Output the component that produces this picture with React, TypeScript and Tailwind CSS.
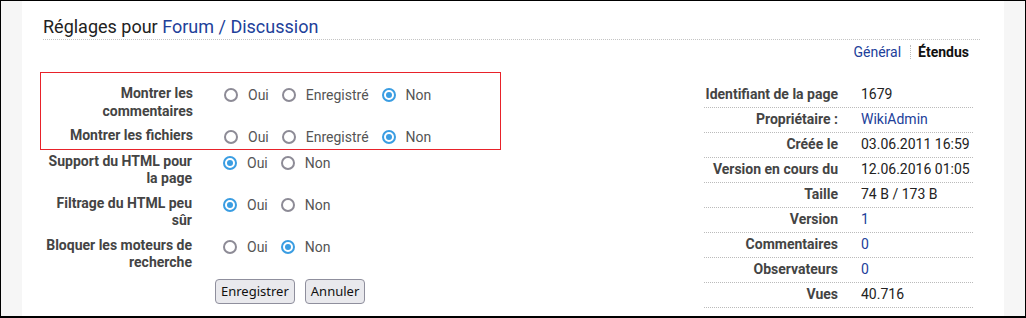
import React from "react";

const BLUE = "text-[#21409a]";

function Radio({ checked }: { checked: boolean }) {
  return checked ? (
    <span className="w-[14px] h-[14px] shrink-0 rounded-full border-2 border-[#3a9de2] flex items-center justify-center">
      <span className="w-[6px] h-[6px] rounded-full bg-[#3a9de2]" />
    </span>
  ) : (
    <span className="w-[14px] h-[14px] shrink-0 rounded-full border-2 border-[#8d8b96]" />
  );
}

function Options({ opts, sel }: { opts: string[]; sel: number }) {
  return (
    <div className="flex items-center h-[18px] translate-y-[1px]">
      {opts.map((o, i) => (
        <div key={o} className="flex items-center mr-[13px]">
          <Radio checked={i === sel} />
          <span className="ml-[10px] text-[#555]">{o}</span>
        </div>
      ))}
    </div>
  );
}

function Row({ label, opts, sel }: { label: string; opts: string[]; sel: number }) {
  return (
    <div className="flex items-start pt-[3px] pb-[4px] px-[1px]">
      <div className="w-[151px] text-right font-bold text-[#444] leading-[17.5px]">{label}</div>
      <div className="ml-[31px] h-[17.5px]">
        <Options opts={opts} sel={sel} />
      </div>
    </div>
  );
}

const info: [string, string, boolean][] = [
  ["Identifiant de la page", "1679", false],
  ["Propriétaire :", "WikiAdmin", true],
  ["Créée le", "03.06.2011 16:59", false],
  ["Version en cours du", "12.06.2016 01:05", false],
  ["Taille", "74 B / 173 B", false],
  ["Version", "1", true],
  ["Commentaires", "0", true],
  ["Observateurs", "0", true],
  ["Vues", "40.716", false],
];

export default function App() {
  const three = ["Oui", "Enregistré", "Non"];
  const two = ["Oui", "Non"];
  return (
    <div
      className="w-[1026px] h-[318px] border-l border-t border-r border-b-2 border-black flex bg-white text-[14px] leading-[18px]"
      style={{ fontFamily: "Roboto, 'Liberation Sans', sans-serif" }}
    >
      <div className="w-[21px] bg-[#f6f6f6]" />
      <div className="flex-1 bg-white pl-[21px] pr-[24px]">
        <div className="pt-[14px] text-[18px] leading-[24px] text-[#222] border-b border-dotted border-[#c4c4c4]">
          Réglages pour <span className={BLUE}>Forum / Discussion</span>
        </div>
        <div className="flex justify-end items-center mt-[3px] pr-[11px] h-[18px]">
          <span className={BLUE}>Général</span>
          <span className="ml-[9px] mr-[7px] h-[14px] border-l border-dotted border-[#bbb]" />
          <span className="font-bold text-[#111]">Étendus</span>
        </div>
        <div className="flex justify-between mt-[11px]">
          <div className="ml-[-3px]">
            <div className="w-[461px] border border-[#e8222a] pt-[9px]">
              <Row label="Montrer les commentaires" opts={three} sel={2} />
              <Row label="Montrer les fichiers" opts={three} sel={2} />
            </div>
            <Row label="Support du HTML pour la page" opts={two} sel={0} />
            <Row label="Filtrage du HTML peu sûr" opts={two} sel={0} />
            <Row label="Bloquer les moteurs de recherche" opts={two} sel={1} />
            <div
              className="flex gap-[10px] ml-[175px] mt-[3px] text-[13px]"
              style={{ fontFamily: "'Noto Sans', 'Open Sans', sans-serif" }}
            >
              <button className="h-[25px] leading-[23px] px-[5px] border border-[#8f8f9d] bg-[#e9e9ed] rounded-[4px] text-[#111]">
                Enregistrer
              </button>
              <button className="h-[25px] leading-[23px] px-[5px] border border-[#8f8f9d] bg-[#e9e9ed] rounded-[4px] text-[#111]">
                Annuler
              </button>
            </div>
          </div>
          <div className="w-[269px] mr-[7px] mt-[11px]">
            {info.map(([l, v, link]) => (
              <div key={l} className="flex pt-[2px] pb-[4px] border-b border-dotted border-[#bbb]">
                <div className="w-[137px] pr-[3px] text-right font-bold text-[#444]">{l}</div>
                <div className={`pl-[20px] ${link ? BLUE : "text-[#222]"}`}>{v}</div>
              </div>
            ))}
          </div>
        </div>
      </div>
      <div className="w-[21px] bg-[#f6f6f6]" />
    </div>
  );
}
